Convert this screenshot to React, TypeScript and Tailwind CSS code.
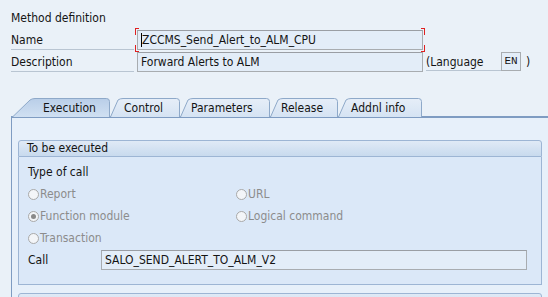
import * as React from "react"

interface TabProps {
  label: string
  width: number
  slant: number
  pad: number
  active?: boolean
}

function Tab({ label, width, slant, pad, active }: TabProps) {
  const id = "g-" + label.replace(/\s/g, "")
  const w = width
  const h = 19
  const d = `M0.5,${h} L${slant - 2},2 Q${slant},0.5 ${slant + 3},0.5 L${w - 3.5},0.5 Q${w - 0.5},0.5 ${w - 0.5},3.5 L${w - 0.5},${h}`
  return (
    <div className="relative h-[19px] shrink-0" style={{ width: w }}>
      <svg className="absolute inset-0" width={w} height={h}>
        <defs>
          <linearGradient id={id} x1="0" y1="0" x2="0" y2="1">
            <stop offset="0" stopColor={active ? "#b9cee8" : "#e6eef8"} />
            <stop offset="1" stopColor={active ? "#d0e0f2" : "#d5e3f3"} />
          </linearGradient>
        </defs>
        <path d={d} fill={`url(#${id})`} stroke="#8ea9c9" strokeWidth="1" />
      </svg>
      <span className="relative block leading-[19px] pt-[1px]" style={{ paddingLeft: pad }}>
        {label}
      </span>
    </div>
  )
}

function Radio({ label, checked }: { label: string; checked?: boolean }) {
  return (
    <div className="flex items-center text-[#8c8c8c]">
      <span className="w-[11px] h-[11px] rounded-full border border-[#a9a9a9] bg-[#f3f5f8] flex items-center justify-center mr-[1px]">
        {checked && <span className="w-[5px] h-[5px] rounded-full bg-[#8a8a8a]" />}
      </span>
      {label}
    </div>
  )
}

export default function App() {
  return (
    <div className="w-[548px] h-[297px] overflow-hidden bg-[#eaf1f8] text-[12px] leading-[16px] text-[#141414] font-['DejaVu_Sans_Condensed','DejaVu_Sans',sans-serif]">
      {/* Header fields */}
      <div className="pl-[11px] pt-[10px]">
        <div className="h-[16px]">Method definition</div>

        <div className="mt-[4px] flex h-[20px]">
          <div className="w-[123px] border-b border-[#b9c5d2] leading-[20px]">Name</div>
          <div className="relative ml-[3px] w-[286px]">
            <div className="h-[20px] border border-[#a8acb0] border-t-[#9a9ea4] bg-[#e3edf8] pl-[3px] leading-[18px]">
              <span className="border-l border-black">ZCCMS_Send_Alert_to_ALM_CPU</span>
            </div>
            {/* focus corners */}
            <div className="absolute -left-[2px] -top-[2px] w-[4px] h-[7px] border-l border-t border-[#e02020]" />
            <div className="absolute -left-[2px] -bottom-[2px] w-[4px] h-[7px] border-l border-b border-[#e02020]" />
            <div className="absolute -right-[2px] -top-[2px] w-[4px] h-[7px] border-r border-t border-[#e02020]" />
            <div className="absolute -right-[2px] -bottom-[2px] w-[4px] h-[7px] border-r border-b border-[#e02020]" />
          </div>
        </div>

        <div className="mt-[2px] flex h-[20px] items-start">
          <div className="w-[123px] h-[20px] border-b border-[#b9c5d2] leading-[20px]">Description</div>
          <div className="ml-[3px] w-[286px] h-[20px] border border-[#a8acb0] border-t-[#9a9ea4] bg-[#e3edf8] pl-[3px] leading-[18px]">
            Forward Alerts to ALM
          </div>
          <div className="ml-[3px] w-[75px] h-[19px] border-b border-[#b9c5d2] leading-[20px]">(Language</div>
          <div className="w-[20px] h-[19px] border border-[#a8acb0] bg-[#e3edf8] text-center leading-[17px] text-[11px] font-['Liberation_Mono',monospace]">
            EN
          </div>
          <div className="ml-[5px] leading-[20px]">)</div>
        </div>
      </div>

      {/* Tabs */}
      <div className="mt-[26px] flex pl-[12px]">
        <Tab label="Execution" width={98} slant={20} pad={31} active />
        <Tab label="Control" width={70} slant={10} pad={14} />
        <Tab label="Parameters" width={90} slant={10} pad={11} />
        <Tab label="Release" width={68} slant={10} pad={11} />
        <Tab label="Addnl info" width={84} slant={10} pad={13} />
      </div>

      {/* Tab panel */}
      <div className="ml-[11px] -mt-[1px] h-[200px] border-l border-t-2 border-[#7f9cc2] bg-[#e7f0fa] pt-[22px] pl-[6px]">
        <div className="w-[524px]">
          <div className="h-[17px] rounded-t-[3px] border border-[#9db5d4] bg-gradient-to-b from-[#e0eaf6] to-[#c8daee] pl-[8px] leading-[15px]">
            To be executed
          </div>
          <div className="border-x border-b border-[#9db5d4] bg-[#dbe8f8] pl-[9px] pt-[4px] pb-[13px]">
            <div className="h-[22px] flex items-center">Type of call</div>
            <div className="grid grid-cols-[208px_1fr]">
              <div className="h-[22px] flex items-center"><Radio label="Report" /></div>
              <div className="h-[22px] flex items-center"><Radio label="URL" /></div>
              <div className="h-[22px] flex items-center"><Radio label="Function module" checked /></div>
              <div className="h-[22px] flex items-center"><Radio label="Logical command" /></div>
              <div className="h-[22px] flex items-center"><Radio label="Transaction" /></div>
              <div className="h-[22px]" />
            </div>
            <div className="h-[22px] flex items-center">
              <div className="w-[73px]">Call</div>
              <div className="w-[426px] h-[20px] border border-[#a8acb0] border-t-[#9a9ea4] bg-[#e3edf8] pl-[3px] leading-[18px]">
                SALO_SEND_ALERT_TO_ALM_V2
              </div>
            </div>
          </div>

          <div className="mt-[8px] h-[17px] rounded-t-[3px] border border-[#9db5d4] bg-gradient-to-b from-[#e0eaf6] to-[#c8daee]" />
        </div>
      </div>
    </div>
  )
}
